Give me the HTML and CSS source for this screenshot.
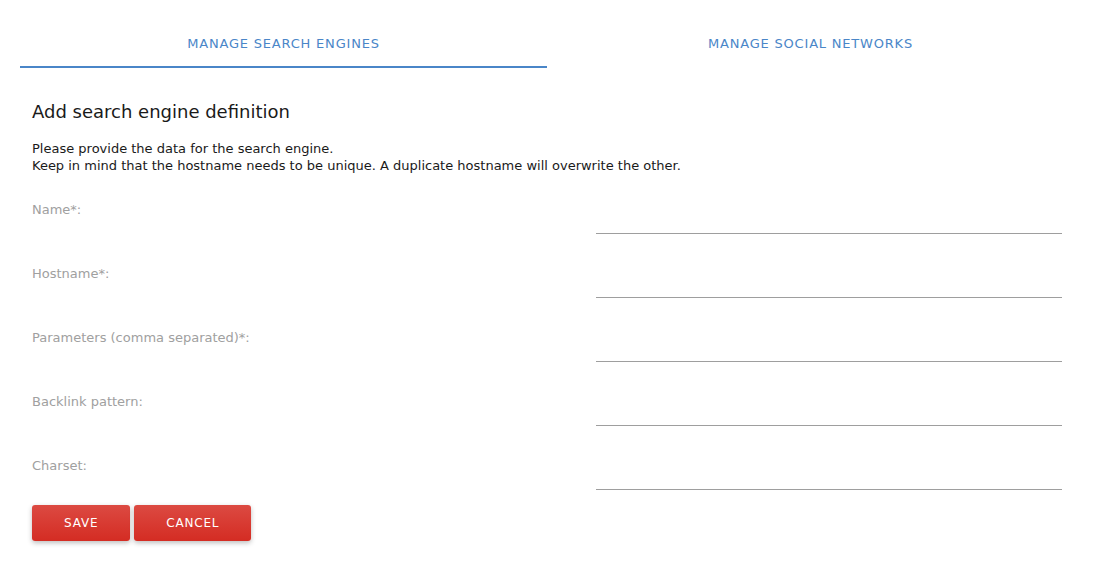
FILE: index.html
```html
<!DOCTYPE html>
<html>
<head>
<meta charset="utf-8">
<link rel="stylesheet" href="styles.css">
</head>
<body>
<div class="card">
  <div class="tabs">
    <div class="tab active">Manage search engines</div>
    <div class="tab">Manage social networks</div>
  </div>
  <div class="content">
    <h2 class="title">Add search engine definition</h2>
    <p class="intro">Please provide the data for the search engine.<br>Keep in mind that the hostname needs to be unique. A duplicate hostname will overwrite the other.</p>
    <div class="form">
      <div class="row"><label class="label">Name*:</label><input class="field" type="text"></div>
      <div class="row"><label class="label">Hostname*:</label><input class="field" type="text"></div>
      <div class="row"><label class="label">Parameters (comma separated)*:</label><input class="field" type="text"></div>
      <div class="row"><label class="label">Backlink pattern:</label><input class="field" type="text"></div>
      <div class="row"><label class="label">Charset:</label><input class="field" type="text"></div>
    </div>
    <div class="actions">
      <button class="btn">Save</button>
      <button class="btn">Cancel</button>
    </div>
  </div>
</div>
</body>
</html>
```

FILE: styles.css
```css
* { box-sizing: border-box; }
html, body { margin: 0; padding: 0; background: #fff; }
body {
  font-family: "DejaVu Sans", sans-serif;
  color: #222;
  width: 1094px;
  height: 581px;
  overflow: hidden;
}
.card {
  padding: 20px 20px 0 20px;
}
.tabs {
  display: flex;
  height: 48px;
}
.tab {
  flex: 1;
  display: flex;
  align-items: center;
  justify-content: center;
  text-transform: uppercase;
  font-size: 13px;
  letter-spacing: 0.8px;
  color: #4a86c8;
  border-bottom: 2px solid transparent;
}
.tab.active {
  border-bottom-color: #4a86c8;
}
.content {
  padding: 0 12px;
}
.title {
  margin: 32px 0 0 0;
  font-size: 18px;
  line-height: 24px;
  font-weight: normal;
  color: #1a1a1a;
}
.intro {
  margin: 16px 0 0 0;
  font-size: 13px;
  line-height: 17px;
  color: #1a1a1a;
}
.form {
  display: flex;
  flex-direction: column;
  margin-top: -1px;
}
.row {
  display: grid;
  grid-template-columns: 564px 466px;
  height: 64px;
}
.label {
  padding-top: 28px;
  font-size: 13px;
  line-height: 17px;
  color: #a0a0a0;
}
.field {
  align-self: end;
  margin: 0 0 3px 0;
  height: 30px;
  border: none;
  border-bottom: 1px solid #9e9e9e;
  outline: none;
  background: transparent;
  font-family: inherit;
  font-size: 13px;
  padding: 0;
}
.actions {
  display: flex;
  gap: 4px;
  margin-top: 12px;
}
.btn {
  height: 36px;
  padding: 0 32px;
  border: none;
  border-radius: 3px;
  background: linear-gradient(#dc4a42, #d42c23);
  color: #fff;
  font-family: "DejaVu Sans", sans-serif;
  font-size: 12px;
  letter-spacing: 0.8px;
  text-transform: uppercase;
  box-shadow: 0 2px 5px rgba(0,0,0,0.26);
}
```
